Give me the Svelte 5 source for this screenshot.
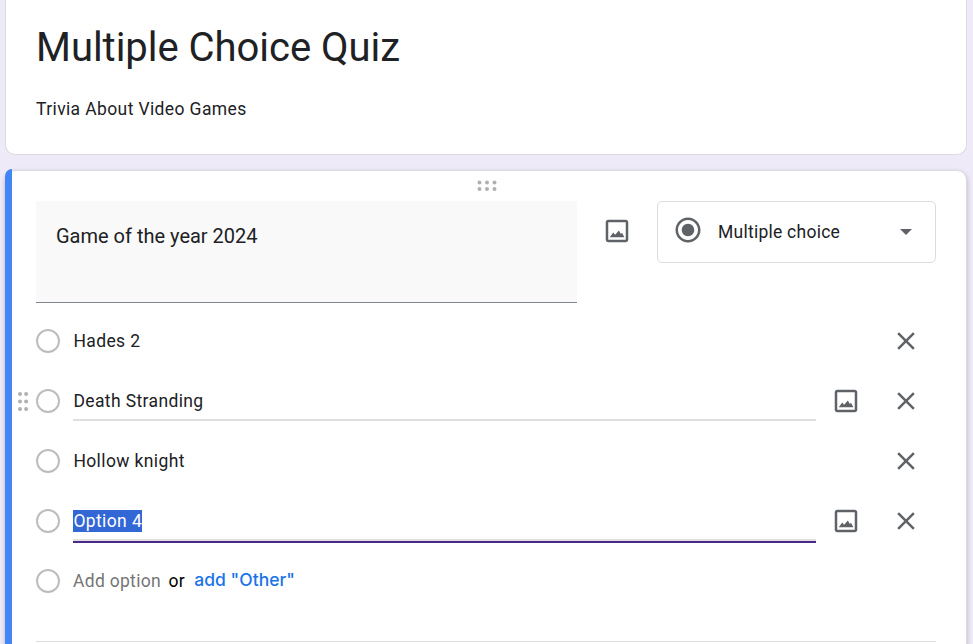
<script lang="ts">
  type Option = { label: string; ruled?: boolean; active?: boolean; grip?: boolean }

  const options: Option[] = [
    { label: 'Hades 2' },
    { label: 'Death Stranding', ruled: true, grip: true },
    { label: 'Hollow knight' },
    { label: 'Option 4', ruled: true, active: true },
  ]
</script>

{#snippet imageIcon()}
  <svg class="icon" viewBox="0 0 24 24" width="30" height="30">
    <path d="M19 3H5c-1.1 0-2 .9-2 2v14c0 1.1.9 2 2 2h14c1.1 0 2-.9 2-2V5c0-1.1-.9-2-2-2zm0 16H5V5h14v14z" />
    <path d="M6.2 17 9 13.2l1.5 1.8 3-3.4 1.6 2.7.9-.9 1.9 3.6z" />
  </svg>
{/snippet}

<div class="page">
  <section class="card header">
    <h1>Multiple Choice Quiz</h1>
    <p>Trivia About Video Games</p>
  </section>

  <section class="card question">
    <div class="accent"></div>
    <svg class="handle" viewBox="0 0 20 12" width="20" height="12">
      {#each [2.5, 10, 17.5] as x}
        <circle cx={x} cy="2.6" r="2" />
        <circle cx={x} cy="9" r="2" />
      {/each}
    </svg>

    <div class="top">
      <div class="title">Game of the year 2024</div>
      <button class="icon-btn" aria-label="Add image">{@render imageIcon()}</button>
      <div class="select">
        <svg class="icon" viewBox="0 0 24 24" width="30" height="30">
          <path d="M12 7c-2.76 0-5 2.24-5 5s2.24 5 5 5 5-2.24 5-5-2.24-5-5-5zm0-5C6.48 2 2 6.48 2 12s4.48 10 10 10 10-4.48 10-10S17.52 2 12 2zm0 18c-4.42 0-8-3.58-8-8s3.58-8 8-8 8 3.58 8 8-3.58 8-8 8z" />
        </svg>
        <span>Multiple choice</span>
        <svg class="icon arrow" viewBox="0 0 12 6" width="12" height="6">
          <path d="M0 0h12L6 6z" />
        </svg>
      </div>
    </div>

    <ul>
      {#each options as option}
        <li>
          {#if option.grip}
            <svg class="grip" viewBox="0 0 12 20" width="12" height="20">
              {#each [2.9, 10.4, 17.9] as y}
                <circle cx="3" cy={y} r="2" />
                <circle cx="9.1" cy={y} r="2" />
              {/each}
            </svg>
          {/if}
          <span class="radio"></span>
          <div class="field" class:ruled={option.ruled} class:active={option.active}>
            <span class="label">{option.label}</span>
          </div>
          {#if option.ruled}
            <button class="icon-btn" aria-label="Add image">{@render imageIcon()}</button>
          {/if}
          <button class="icon-btn remove" aria-label="Remove option">
            <svg class="icon" viewBox="0 0 24 24" width="30" height="30">
              <path d="M19 6.41 17.59 5 12 10.59 6.41 5 5 6.41 10.59 12 5 17.59 6.41 19 12 13.41 17.59 19 19 17.59 13.41 12z" />
            </svg>
          </button>
        </li>
      {/each}
      <li>
        <span class="radio"></span>
        <span class="add">Add option</span>
        <span class="or">or</span>
        <button class="other">add "Other"</button>
      </li>
    </ul>
    <div class="divider"></div>
  </section>
</div>

<style>
  :global(body) {
    background: #eeeaf8;
  }
  .page {
    box-sizing: border-box;
    height: 644px;
    padding: 0 6px 0 5px;
    overflow: hidden;
    font: 17.5px/25px Roboto, sans-serif;
    letter-spacing: 0.25px;
    color: #202124;
  }
  .card {
    box-sizing: border-box;
    background: #fff;
    border: 1px solid #dadce0;
    border-radius: 10px;
  }
  .header {
    height: 155px;
    padding: 23px 30px 0;
    border-top: 0;
    border-radius: 0 0 10px 10px;
  }
  h1 {
    margin: 0;
    font-size: 40px;
    font-weight: 400;
    line-height: 50px;
    letter-spacing: -0.03px;
  }
  p {
    margin: 24px 0 0;
    letter-spacing: 0.38px;
  }
  .question {
    position: relative;
    height: 500px;
    margin-top: 15px;
    padding: 0 30px;
    box-shadow: 0 2px 5px rgba(0, 0, 0, 0.24);
  }
  .accent {
    position: absolute;
    top: -2px;
    bottom: -1px;
    left: -1px;
    width: 7px;
    background: #4285f4;
    border-radius: 8px 0 0 8px;
  }
  .handle {
    display: block;
    margin: 9px auto 9px 441px;
    fill: #b0b0b0;
  }
  .grip {
    position: absolute;
    left: -19px;
    fill: #b0b0b0;
  }
  .icon {
    display: block;
    fill: #5f6368;
  }
  .top {
    display: flex;
    align-items: flex-start;
  }
  .title {
    box-sizing: border-box;
    width: 541px;
    height: 102px;
    padding: 20px;
    font-size: 20px;
    line-height: 30px;
    letter-spacing: 0;
    background: #f9f9f9;
    border-bottom: 1px solid #80868b;
  }
  button {
    margin: 0;
    padding: 0;
    border: 0;
    background: none;
  }
  .icon-btn {
    display: flex;
    align-items: center;
    justify-content: center;
    width: 60px;
    height: 60px;
  }
  .top .icon-btn {
    margin: 0 10px;
  }
  .select {
    box-sizing: border-box;
    display: flex;
    align-items: center;
    width: 279px;
    height: 62px;
    padding: 0 23px 0 14.8px;
    border: 1px solid #dadce0;
    border-radius: 5px;
  }
  .select .icon:first-child {
    margin: -3.6px 15.2px 0 0;
  }
  .arrow {
    margin-left: auto;
  }
  ul {
    margin: 8px 0 0;
    padding: 0;
    list-style: none;
  }
  li {
    position: relative;
    display: flex;
    align-items: center;
    height: 60px;
  }
  .radio {
    box-sizing: border-box;
    width: 24px;
    height: 24px;
    margin-right: 13px;
    border: 2px solid #bdbdbd;
    border-radius: 50%;
  }
  .field {
    box-sizing: border-box;
    display: flex;
    align-items: center;
    width: 743px;
    height: 40px;
    padding-top: 2px;
    border-bottom: 2px solid transparent;
    letter-spacing: 0.38px;
  }
  .label {
    text-indent: 0.4px;
  }
  .ruled {
    border-color: #e0e0e0;
  }
  .active {
    box-shadow: 0 2px #4a2a86;
  }
  .active .label {
    line-height: 22px;
    color: #fff;
    background: #3367d6;
  }
  .remove {
    margin-left: auto;
  }
  .add {
    letter-spacing: 0.3px;
    color: #757575;
  }
  .or {
    margin: 0 9.5px 0 7.5px;
    color: #000;
  }
  .other {
    margin-top: -3px;
    font: 500 17.5px/25px Inter, sans-serif;
    color: #1a73e8;
  }
  .divider {
    height: 1px;
    margin-top: 30px;
    background: #dadce0;
  }
</style>
